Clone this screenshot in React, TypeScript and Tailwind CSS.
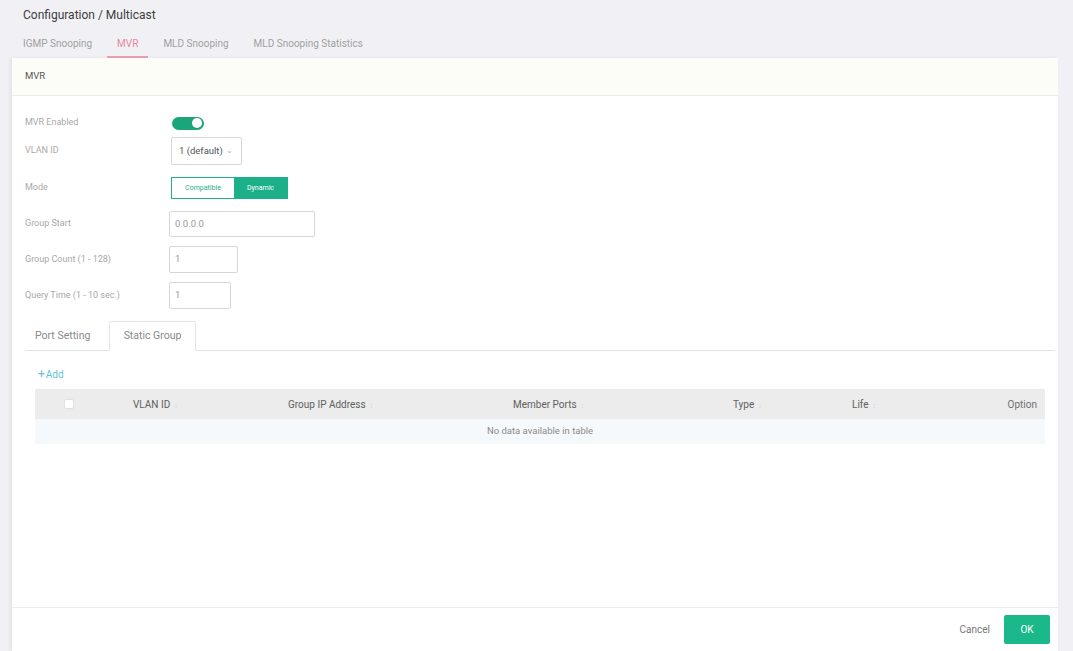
import React from "react";

const columns = [
  { title: "VLAN ID", w: "w-[155px]" },
  { title: "Group IP Address", w: "w-[225px]" },
  { title: "Member Ports", w: "w-[220px]" },
  { title: "Type", w: "w-[119px]" },
  { title: "Life", w: "flex-1" },
];

function SortMark() {
  return <span className="ml-[4px] text-[7px] text-[#d4d4d4]">↕</span>;
}

function Label({ children }: { children: React.ReactNode }) {
  return <div className="w-[146px] shrink-0 text-[9px] text-[#a8a8a8]">{children}</div>;
}

export default function App() {
  return (
    <div className="flex h-[651px] w-full flex-col overflow-hidden bg-[#f1f1f5] font-[Roboto,sans-serif]">
      {/* breadcrumb + tabs */}
      <div className="h-[58px] shrink-0 pl-[23px]">
        <div className="pt-[8px] text-[12px] leading-[14px] text-[#3d3d3d]">Configuration / Multicast</div>
        <nav className="mt-[16px] flex text-[10px] leading-[12px] text-[#a0a0a0]">
          {["IGMP Snooping", "MVR", "MLD Snooping", "MLD Snooping Statistics"].map((t) => (
            <div
              key={t}
              className={
                t === "MVR"
                  ? "mr-[15px] -ml-[10px] border-b-2 border-[#efa0b3] px-[10px] pb-[6px] text-[#e8879e]"
                  : "mr-[25px] pb-[8px]"
              }
            >
              {t}
            </div>
          ))}
        </nav>
      </div>

      <div className="ml-[12px] mr-[15px] flex flex-1 flex-col bg-white shadow-[-2px_0_4px_rgba(0,0,0,0.06)]">
        <div className="flex h-[38px] shrink-0 items-center border-b border-[#ececec] bg-[#fdfdf7] pl-[13px] text-[9.5px] text-[#555]">
          MVR
        </div>

        {/* form */}
        <div className="pl-[13px]">
          <div className="mt-[19px] flex h-[16px] items-center">
            <Label>MVR Enabled</Label>
            <div className="ml-[1px] flex h-[13px] w-[32px] items-center justify-end rounded-full bg-[#1aa57b] pr-[2px]">
              <div className="h-[10px] w-[10px] rounded-full bg-white" />
            </div>
          </div>

          <div className="mt-[6px] flex h-[28px] items-center">
            <Label>VLAN ID</Label>
            <div className="flex h-[28px] w-[71px] items-center rounded-[2px] border border-[#d6d6d6] pl-[7px] text-[9.5px] text-[#555]">
              1 (default)
              <span className="ml-[3px] text-[8px] text-[#aaa]">⌄</span>
            </div>
          </div>

          <div className="mt-[12px] flex h-[22px] items-center">
            <Label>Mode</Label>
            <div className="flex h-[22px] border border-[#1bb088] text-[7px]">
              <div className="flex w-[62px] items-center justify-center bg-white text-[#1bb088]">Compatible</div>
              <div className="flex w-[53px] items-center justify-center bg-[#1bb088] text-white">Dynamic</div>
            </div>
          </div>

          <div className="mt-[12px] flex h-[26px] items-center">
            <Label>Group Start</Label>
            <div className="-ml-[2px] flex h-[26px] w-[146px] items-center rounded-[2px] border border-[#d6d6d6] pl-[5px] text-[9.5px] text-[#9a9a9a]">
              0.0.0.0
            </div>
          </div>

          <div className="mt-[9px] flex h-[27px] items-center">
            <Label>Group Count (1 - 128)</Label>
            <div className="-ml-[2px] flex h-[27px] w-[69px] items-center rounded-[2px] border border-[#d6d6d6] pl-[5px] text-[9.5px] text-[#9a9a9a]">
              1
            </div>
          </div>

          <div className="mt-[9px] flex h-[27px] items-center">
            <Label>Query Time (1 - 10 sec.)</Label>
            <div className="-ml-[2px] flex h-[27px] w-[62px] items-center rounded-[2px] border border-[#d6d6d6] pl-[5px] text-[9.5px] text-[#9a9a9a]">
              1
            </div>
          </div>
        </div>

        {/* port setting / static group */}
        <div className="mr-[3px] ml-[13px] mt-[13px] flex h-[29px] items-end border-b border-[#e4e4e4] text-[10.5px] text-[#8a8a8a]">
          <div className="flex h-[29px] w-[84px] items-center pl-[10px]">Port Setting</div>
          <div className="-mb-px flex h-[30px] w-[87px] items-center justify-center rounded-t-[2px] border border-b-white border-[#e4e4e4] bg-white">
            Static Group
          </div>
        </div>

        <div className="ml-[26px] mt-[16px] text-[10px] leading-[14px] text-[#62c4cf]">
          <span className="mr-[1px] text-[12px]">+</span>Add
        </div>

        {/* table */}
        <div className="ml-[23px] mr-[13px] mt-[7px]">
          <div className="flex h-[30px] items-center bg-[#ececec] text-[10px] text-[#606060]">
            <div className="w-[98px] pl-[29px]">
              <div className="h-[10px] w-[10px] rounded-[2px] border border-[#e0e0e0] bg-white" />
            </div>
            {columns.map((c) => (
              <div key={c.title} className={c.w}>
                {c.title}
                <SortMark />
              </div>
            ))}
            <div className="pr-[8px] text-[#707070]">Option</div>
          </div>
          <div className="flex h-[25px] items-center justify-center bg-[#f6f9fc] text-[9.5px] text-[#8a8a8a]">
            No data available in table
          </div>
        </div>

        <div className="flex-1" />

        {/* footer */}
        <div className="flex h-[44px] shrink-0 items-center justify-end border-t border-[#ececec] pr-[8px]">
          <button className="mr-[14px] text-[10px] text-[#777]">Cancel</button>
          <button className="h-[29px] w-[46px] rounded-[2px] bg-[#1bb88c] text-[10px] text-white">OK</button>
        </div>
      </div>
    </div>
  );
}
